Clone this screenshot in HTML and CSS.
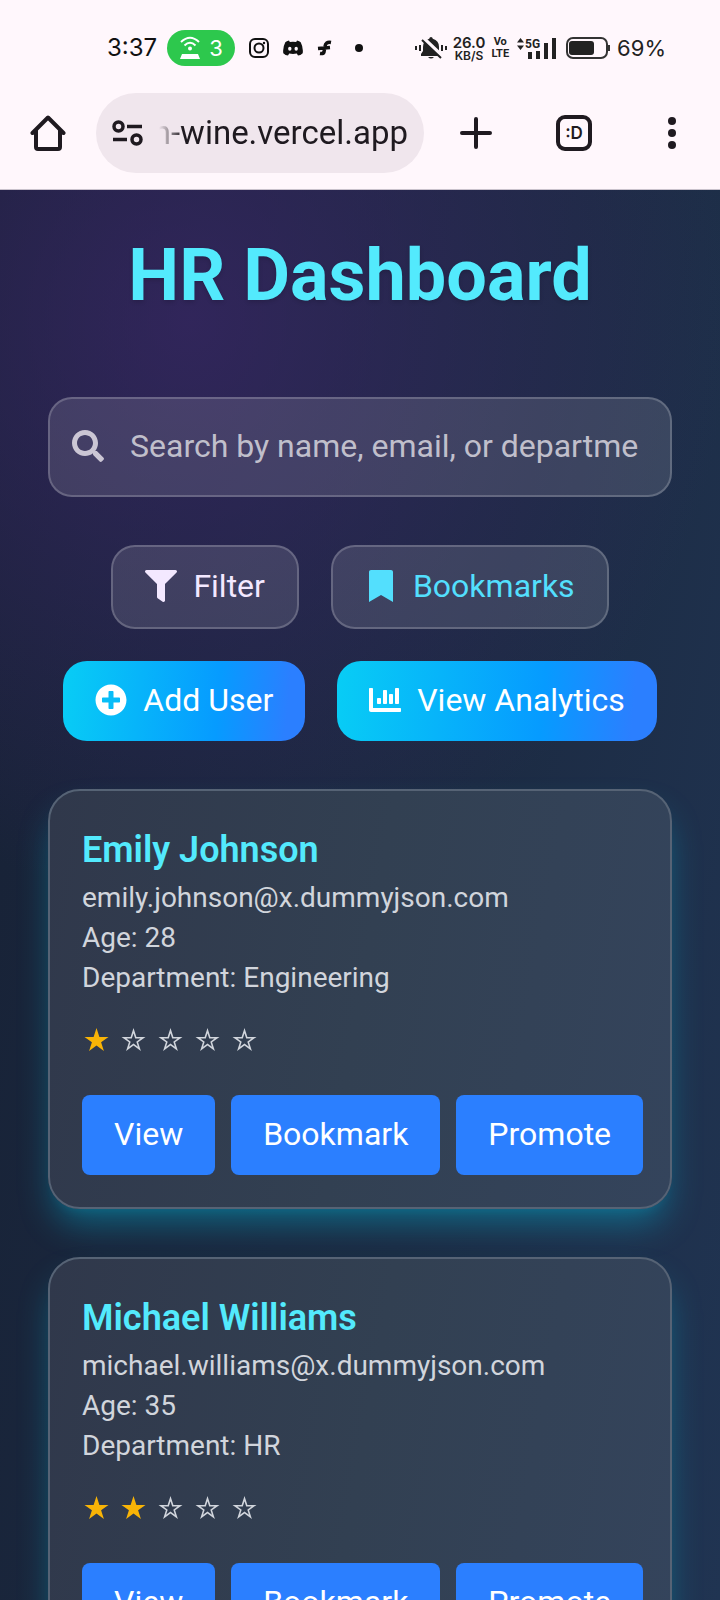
FILE: index.html
```html
<!DOCTYPE html>
<html lang="en">
<head>
<meta charset="utf-8">
<meta name="viewport" content="width=device-width, initial-scale=1">
<title>HR Dashboard</title>
<link rel="stylesheet" href="styles.css">
</head>
<body>
<svg class="sprite" aria-hidden="true">
  <symbol id="star-full" viewBox="0 0 24 24"><path d="M12 0l2.9 8.9H24l-7.4 5.4L19.4 23 12 17.6 4.6 23l2.8-8.7L0 8.900h9.100z"/></symbol>
  <symbol id="star-empty" viewBox="0 0 24 24"><path fill-rule="evenodd" d="M12 0l2.900 8.900H24l-7.400 5.400L19.400 23 12 17.600 4.600 23l2.800-8.700L0 8.900h9.100zM12 5.200l-1.700 5.300H4.900l4.300 3.200-1.600 5.100L12 15.600l4.400 3.200-1.600-5.100 4.300-3.200h-5.400z"/></symbol>
</svg>
<div class="screen">
  <header class="browser">
    <div class="status">
      <div class="status-group">
        <span class="clock">3:37</span>
        <span class="hotspot">
          <svg width="22" height="24" viewBox="0 0 22 24" fill="none" stroke="#fff" stroke-width="2"><path d="M2 6Q11-2.500 20 6M5.500 9.500Q11 4 16.500 9.500"/><circle cx="11" cy="12.500" r="2" fill="#fff" stroke="none"/><path d="M3 18h16l2 5H1z" fill="#fff" stroke="none"/></svg>
          <span>3</span>
        </span>
        <span class="notices">
          <svg width="20" height="20" viewBox="0 0 20 20" fill="none" stroke="#111" stroke-width="2"><rect x="1" y="1" width="18" height="18" rx="5"/><circle cx="10" cy="10" r="4.500"/><circle cx="15" cy="5" r="1.200" fill="#111" stroke="none"/></svg>
          <svg width="20" height="16" viewBox="0 0 20 16"><path fill="#111" fill-rule="evenodd" d="M6 .5Q3.500 1 2.300 2.200-.5 7.500.3 13.300 2.500 15.500 5 15.500l1.200-2q3.800.8 7.600 0l1.200 2q2.500 0 4.700-2.200.8-5.800-2-11.100Q16.500 1 14 .5l-.8 1.500Q10 1.600 6.800 2zM6.800 6.800q1.700 0 1.700 2t-1.700 2-1.700-2 1.700-2zm6.400 0q1.700 0 1.700 2t-1.700 2-1.700-2 1.700-2z"/></svg>
          <svg width="15" height="16" viewBox="0 0 15 16" fill="none" stroke="#111" stroke-width="3.500"><path d="M14 2.500q-5.500-1-6 4L7 12q-.5 2-4 1.500M1 8.500l12-1"/></svg>
          <svg class="more" width="8" height="8" viewBox="0 0 8 8"><circle cx="4" cy="4" r="4" fill="#111"/></svg>
        </span>
      </div>
      <div class="status-group status-right">
        <svg width="32" height="24" viewBox="0 0 32 24"><path fill="#222" d="M16 1q1.500 0 1.800 1.800Q24 4.500 24 11v4l2 3v2H6v-2l2-3v-4q0-6.500 6.200-8.200Q14.500 1 16 1zm-3 20h6q-3 3-6 0z"/><path stroke="#fff7fc" stroke-width="4" d="M8 2l19 18"/><path stroke="#222" stroke-width="2" d="M7 4l19 18M1 10v4M5 9v6M27 9v6M31 10v4"/></svg>
        <span class="speed"><span>26.0</span><small>KB/S</small></span>
        <span class="volte"><span>Vo</span><span>LTE</span></span>
        <span class="signal">
          <svg class="arrows" width="7" height="12" viewBox="0 0 7 12"><path d="M0 4.500L3.500 0 7 4.500zM0 7.500h7L3.500 12z" fill="#222"/></svg>
          <span class="net">5G</span>
          <svg class="bars" width="29" height="21" viewBox="0 0 29 21"><path d="M1 14h4v7H1zM9 13h4v8H9zM17 5h4v16h-4zM25 0h4v21h-4z" fill="#222"/></svg>
        </span>
        <svg class="battery" width="45" height="22" viewBox="0 0 45 22"><rect x="1" y="1" width="40" height="20" rx="6" fill="none" stroke="#333" stroke-width="2"/><rect x="3" y="4" width="25" height="14" rx="3" fill="#222"/><path d="M43 8v6" stroke="#333" stroke-width="2"/></svg>
        <span class="charge">69%</span>
      </div>
    </div>
    <div class="toolbar">
      <button class="tool" aria-label="Home"><svg width="36" height="36" viewBox="0 0 36 36" fill="none" stroke="#1f1a20" stroke-width="4" stroke-linejoin="round"><path stroke-linecap="round" d="M2.500 18L18 2.500 33.500 18M6 15v17q0 2 2 2h20q2 0 2-2V15"/></svg></button>
      <button class="address">
        <svg width="31" height="26" viewBox="0 0 31 26" fill="none" stroke="#1f1a20" stroke-width="3.500"><circle cx="6.500" cy="6.500" r="4.500"/><path d="M15 6.500h15M1 19.500h14"/><circle cx="24.500" cy="19.500" r="4.500"/></svg>
        <span class="url">n-wine.vercel.app</span>
      </button>
      <div class="tools">
        <button class="tool" aria-label="New tab"><svg width="32" height="32" viewBox="0 0 32 32" stroke="#1f1a20" stroke-width="4" stroke-linecap="round"><path d="M16 2v28M2 16h28"/></svg></button>
        <button class="tool tabs" aria-label="Switch tabs">:D</button>
        <button class="tool" aria-label="Menu"><svg width="8" height="32" viewBox="0 0 8 32" fill="#1f1a20"><circle cx="4" cy="4" r="4"/><circle cx="4" cy="16" r="4"/><circle cx="4" cy="28" r="4"/></svg></button>
      </div>
    </div>
  </header>
  <main class="page">
    <h1 class="title">HR Dashboard</h1>
    <label class="search">
      <svg width="32" height="32" viewBox="0 0 512 512" fill="currentColor"><path d="M505 442.700L405.300 343c-4.500-4.500-10.600-7-17-7H372c27.600-35.300 44-79.700 44-128C416 93.100 322.900 0 208 0S0 93.100 0 208s93.100 208 208 208c48.300 0 92.700-16.400 128-44v16.300c0 6.400 2.500 12.500 7 17l99.700 99.700c9.400 9.400 24.600 9.400 33.900 0l28.300-28.300c9.400-9.400 9.400-24.600.1-34zM208 336c-70.700 0-128-57.200-128-128 0-70.700 57.200-128 128-128 70.700 0 128 57.200 128 128 0 70.700-57.200 128-128 128z"/></svg>
      <input class="search-input" type="text" aria-label="Search users" placeholder="Search by name, email, or department...">
    </label>
    <div class="actions">
      <button class="action glass"><svg width="32" height="32" viewBox="0 0 512 512" fill="currentColor"><path d="M488 0H24C2.700 0-8 25.900 7.100 41L192 225.900V432c0 7.800 3.800 15.200 10.200 19.700l80 56C298 518.700 320 507.500 320 488V225.900L504.900 41C520 25.900 509.300 0 488 0z"/></svg>Filter</button>
      <button class="action glass accent"><svg width="32" height="32" viewBox="0 0 512 512" fill="currentColor"><path d="M64 512V32C64 14 78 0 96 0h320c18 0 32 14 32 32v480L256 400z"/></svg>Bookmarks</button>
      <button class="action solid"><svg width="32" height="32" viewBox="0 0 512 512" fill="currentColor"><path d="M256 8C119 8 8 119 8 256s111 248 248 248 248-111 248-248S393 8 256 8zm144 276c0 6.600-5.400 12-12 12h-92v92c0 6.600-5.400 12-12 12h-56c-6.600 0-12-5.400-12-12v-92h-92c-6.600 0-12-5.400-12-12v-56c0-6.600 5.400-12 12-12h92v-92c0-6.600 5.400-12 12-12h56c6.600 0 12 5.400 12 12v92h92c6.600 0 12 5.400 12 12v56z"/></svg>Add User</button>
      <button class="action solid"><svg width="32" height="32" viewBox="0 0 512 512" fill="currentColor"><path d="M332.800 320h38.400c6.400 0 12.800-6.400 12.800-12.800V172.800c0-6.400-6.400-12.800-12.800-12.800h-38.400c-6.400 0-12.800 6.400-12.800 12.800v134.400c0 6.400 6.400 12.800 12.800 12.800zm96 0h38.400c6.400 0 12.800-6.400 12.800-12.800V76.800c0-6.400-6.400-12.800-12.800-12.800h-38.400c-6.400 0-12.800 6.400-12.800 12.800v230.400c0 6.400 6.400 12.800 12.800 12.800zm-288 0h38.400c6.400 0 12.800-6.400 12.800-12.800v-70.400c0-6.400-6.400-12.800-12.800-12.800h-38.400c-6.400 0-12.800 6.400-12.800 12.800v70.400c0 6.400 6.400 12.800 12.800 12.800zm96 0h38.400c6.400 0 12.800-6.400 12.800-12.800V108.800c0-6.400-6.400-12.800-12.800-12.800h-38.400c-6.400 0-12.800 6.400-12.800 12.800v198.400c0 6.400 6.400 12.800 12.800 12.800zM496 384H64V80c0-8.800-7.200-16-16-16H16C7.200 64 0 71.200 0 80v336c0 17.700 14.300 32 32 32h464c8.800 0 16-7.200 16-16v-32c0-8.800-7.200-16-16-16z"/></svg>View Analytics</button>
    </div>
    <section class="users">
      <article class="card">
        <h2 class="name">Emily Johnson</h2>
        <p class="detail">emily.johnson@x.dummyjson.com</p>
        <p class="detail">Age: 28</p>
        <p class="detail">Department: Engineering</p>
        <div class="rating" role="img" aria-label="1 out of 5 stars">
          <svg class="star on"><use href="#star-full"/></svg><svg class="star"><use href="#star-empty"/></svg><svg class="star"><use href="#star-empty"/></svg><svg class="star"><use href="#star-empty"/></svg><svg class="star"><use href="#star-empty"/></svg>
        </div>
        <div class="card-actions"><button class="btn">View</button><button class="btn">Bookmark</button><button class="btn">Promote</button></div>
      </article>
      <article class="card">
        <h2 class="name">Michael Williams</h2>
        <p class="detail">michael.williams@x.dummyjson.com</p>
        <p class="detail">Age: 35</p>
        <p class="detail">Department: HR</p>
        <div class="rating" role="img" aria-label="2 out of 5 stars">
          <svg class="star on"><use href="#star-full"/></svg><svg class="star on"><use href="#star-full"/></svg><svg class="star"><use href="#star-empty"/></svg><svg class="star"><use href="#star-empty"/></svg><svg class="star"><use href="#star-empty"/></svg>
        </div>
        <div class="card-actions"><button class="btn">View</button><button class="btn">Bookmark</button><button class="btn">Promote</button></div>
      </article>
    </section>
  </main>
</div>
</body>
</html>
```
FILE: styles.css
```css
* { box-sizing: border-box; margin: 0; }
body { font-family: Roboto, "Liberation Sans", sans-serif; color: #fff; }
button, input { font: inherit; color: inherit; border: 0; background: none; padding: 0; }
svg { display: block; flex: none; }
.sprite { position: absolute; width: 0; height: 0; }
.screen { height: 100vh; display: flex; flex-direction: column; overflow: hidden; }

.browser { flex: none; background: #fff7fc; color: #1f1a20; padding: 28px 30px 16px; border-bottom: 1px solid #c9c2cc; }
.status { display: flex; justify-content: space-between; align-items: center; height: 40px; padding: 0 24px 0 77px; font-family: Inter, sans-serif; color: #222; }
.status-group { display: flex; align-items: center; gap: 10px; }
.clock { font-size: 24px; line-height: 28px; color: #111; }
.charge { font-size: 22px; line-height: 28px; }
.hotspot { display: flex; align-items: center; gap: 8px; height: 36px; padding: 0 12px; border-radius: 18px; background: #2dc84d; color: #fff; font-size: 22px; }
.notices { display: flex; align-items: center; gap: 14px; margin-left: 4px; }
.more { margin-left: 9px; }
.status-right { gap: 6px; }
.speed { display: flex; flex-direction: column; align-items: center; font-size: 15px; line-height: 15px; font-weight: 600; }
.speed small { font-size: 12px; line-height: 12px; }
.volte { display: flex; flex-direction: column; align-items: center; font: 700 11px/12px Roboto, sans-serif; }
.signal { display: grid; grid-template-columns: 7px 31px; column-gap: 1px; margin-left: 2px; }
.net { grid-area: 1 / 2; font: 700 12px/12px Roboto, sans-serif; }
.arrows { grid-area: 1 / 1; }
.bars { grid-area: 1 / 2; justify-self: end; }
.battery { margin-left: 4px; }

.toolbar { display: flex; align-items: center; margin-top: 25px; }
.tool { width: 36px; height: 36px; display: flex; align-items: center; justify-content: center; flex: none; }
.address { flex: 1; min-width: 0; height: 80px; margin: 0 34px 0 30px; padding: 0 16px; border-radius: 40px; background: #f0e6ed; display: flex; align-items: center; gap: 16px; }
.url { flex: 1; min-width: 0; display: flex; justify-content: flex-end; overflow: hidden; white-space: nowrap; font-size: 33px; line-height: 40px; -webkit-mask-image: linear-gradient(90deg, transparent, #000 24px); mask-image: linear-gradient(90deg, transparent, #000 24px); }
.tools { display: flex; gap: 62px; }
.tabs { border: 4px solid #1f1a20; border-radius: 9px; font: 600 17px/20px Inter, sans-serif; }

.page {
  flex: 1; min-height: 0; overflow-y: auto; scrollbar-width: none; padding: 46px 48px;
  background: radial-gradient(ellipse 540px 580px at 190px 130px, rgba(62, 38, 108, .65), rgba(62, 38, 108, 0)), linear-gradient(100deg, #172135, #1c2b43 60%, #203452);
}
.title { font-size: 72px; line-height: 80px; font-weight: 700; text-align: center; color: #53eafd; text-shadow: 0 2px 4px rgba(0, 0, 0, .15); }
.search { display: flex; align-items: center; gap: 26px; margin-top: 81px; height: 100px; padding: 0 32px 2px 22px; border: 2px solid rgba(255, 255, 255, .2); border-radius: 24px; background: rgba(255, 255, 255, .12); color: #cbc6d4; }
.search-input { flex: 1; min-width: 0; font-size: 32px; line-height: 48px; outline: none; }
.search-input::placeholder { color: #c0bfcb; opacity: 1; }
.actions { display: flex; flex-wrap: wrap; justify-content: center; gap: 32px; margin-top: 48px; }
.action { display: flex; align-items: center; gap: 16px; height: 80px; padding: 0 32px 2px; border-radius: 24px; font-size: 32px; line-height: 48px; }
.glass { height: 84px; border: 2px solid rgba(255, 255, 255, .2); background: rgba(255, 255, 255, .12); color: #f3e8ff; }
.accent { color: #53dffd; }
.solid { background: linear-gradient(95deg, #08cdf5, #069bff 64%, #2b7fff 92%); }
.users { display: grid; grid-template-columns: minmax(0, 1fr); gap: 48px; margin-top: 48px; }
.card { padding: 31px 32px 32px; border: 2px solid #566375; border-radius: 32px; background: linear-gradient(100deg, #30384b, #324052 50%, #34445c); box-shadow: 0 20px 34px -6px rgba(0, 184, 219, .42), 0 8px 12px -8px rgba(0, 184, 219, .2); }
.name { font-size: 36px; line-height: 56px; font-weight: 600; color: #53eafd; }
.detail { font-size: 28px; line-height: 40px; color: #d1d5dc; }
.rating { display: flex; gap: 8px; margin-top: 30px; color: #d1d5dc; }
.star { width: 29px; height: 24px; fill: currentColor; }
.on { color: #f9b406; }
.card-actions { display: flex; gap: 16px; margin-top: 43px; }
.btn { height: 80px; padding: 0 32px 2px; border-radius: 8px; background: #2b7fff; font-size: 32px; line-height: 48px; }
```
